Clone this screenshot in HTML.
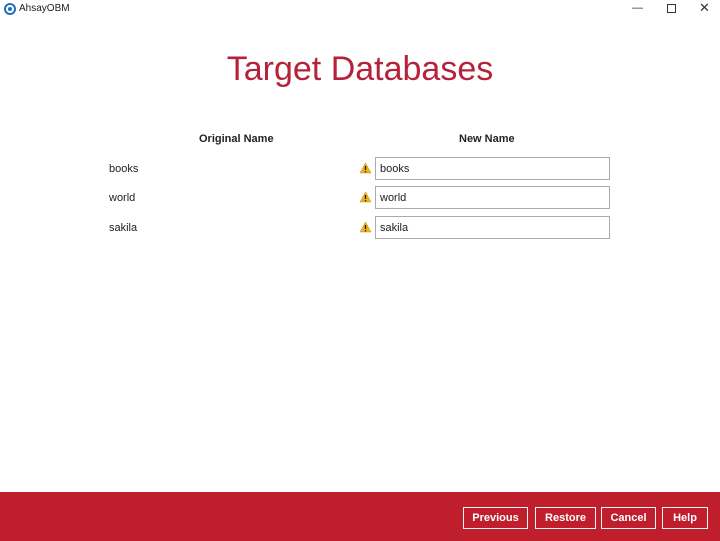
<!DOCTYPE html>
<html><head><style>
body{margin:0;width:720px;height:541px;background:#fff;font-family:"Liberation Sans",sans-serif;position:relative;overflow:hidden}
.a{position:absolute}
.t{font-size:12px;color:#222}
.inp{position:absolute;left:375px;width:229px;height:21px;border:1px solid #aaa;box-sizing:content-box;font-size:11px;line-height:22px;padding-left:4px;color:#222}
.btn{position:absolute;top:507px;height:20px;border:1px solid #f3f3f3;color:#fff;font-size:11px;font-weight:bold;text-align:center;line-height:20px}
</style></head><body>
<svg class="a" style="left:4px;top:3px" width="12" height="12"><circle cx="6" cy="6" r="5" fill="none" stroke="#1f6fb5" stroke-width="2"/><circle cx="6" cy="6" r="2" fill="#1f6fb5"/></svg>
<div class="a" style="left:19px;top:3px;font-size:10px;color:#222">AhsayOBM</div>
<div class="a" style="left:632px;top:2px;font-size:11px;color:#333">&#8212;</div>
<div class="a" style="left:667px;top:4px;width:7px;height:7px;border:1px solid #333"></div>
<div class="a" style="left:699px;top:0px;font-size:13px;color:#333">✕</div>
<div class="a" style="left:0;width:720px;top:50px;text-align:center;font-size:34px;color:#b5223a;font-weight:300">Target Databases</div>
<div class="a t" style="left:199px;top:133px;font-weight:bold;font-size:11px">Original Name</div>
<div class="a t" style="left:459px;top:133px;font-weight:bold;font-size:11px">New Name</div>
<div class="a t" style="left:109px;top:163px;font-size:11px">books</div>
<div class="a t" style="left:109px;top:192px;font-size:11px">world</div>
<div class="a t" style="left:109px;top:222px;font-size:11px">sakila</div>
<svg class="a" style="left:359px;top:162px" width="13" height="12"><path d="M6.5 1L12 11H1Z" fill="#f0b323" stroke="#c98a00" stroke-width=".5"/><rect x="5.8" y="4" width="1.4" height="4" fill="#222"/><rect x="5.8" y="9" width="1.4" height="1.3" fill="#222"/></svg>
<svg class="a" style="left:359px;top:191px" width="13" height="12"><path d="M6.5 1L12 11H1Z" fill="#f0b323" stroke="#c98a00" stroke-width=".5"/><rect x="5.8" y="4" width="1.4" height="4" fill="#222"/><rect x="5.8" y="9" width="1.4" height="1.3" fill="#222"/></svg>
<svg class="a" style="left:359px;top:221px" width="13" height="12"><path d="M6.5 1L12 11H1Z" fill="#f0b323" stroke="#c98a00" stroke-width=".5"/><rect x="5.8" y="4" width="1.4" height="4" fill="#222"/><rect x="5.8" y="9" width="1.4" height="1.3" fill="#222"/></svg>
<div class="inp" style="top:157px">books</div>
<div class="inp" style="top:186px">world</div>
<div class="inp" style="top:216px">sakila</div>
<div class="a" style="left:0;top:492px;width:720px;height:49px;background:#bf1e2d"></div>
<div class="btn" style="left:463px;width:63px">Previous</div>
<div class="btn" style="left:535px;width:59px">Restore</div>
<div class="btn" style="left:601px;width:53px">Cancel</div>
<div class="btn" style="left:662px;width:44px">Help</div>
</body></html>
